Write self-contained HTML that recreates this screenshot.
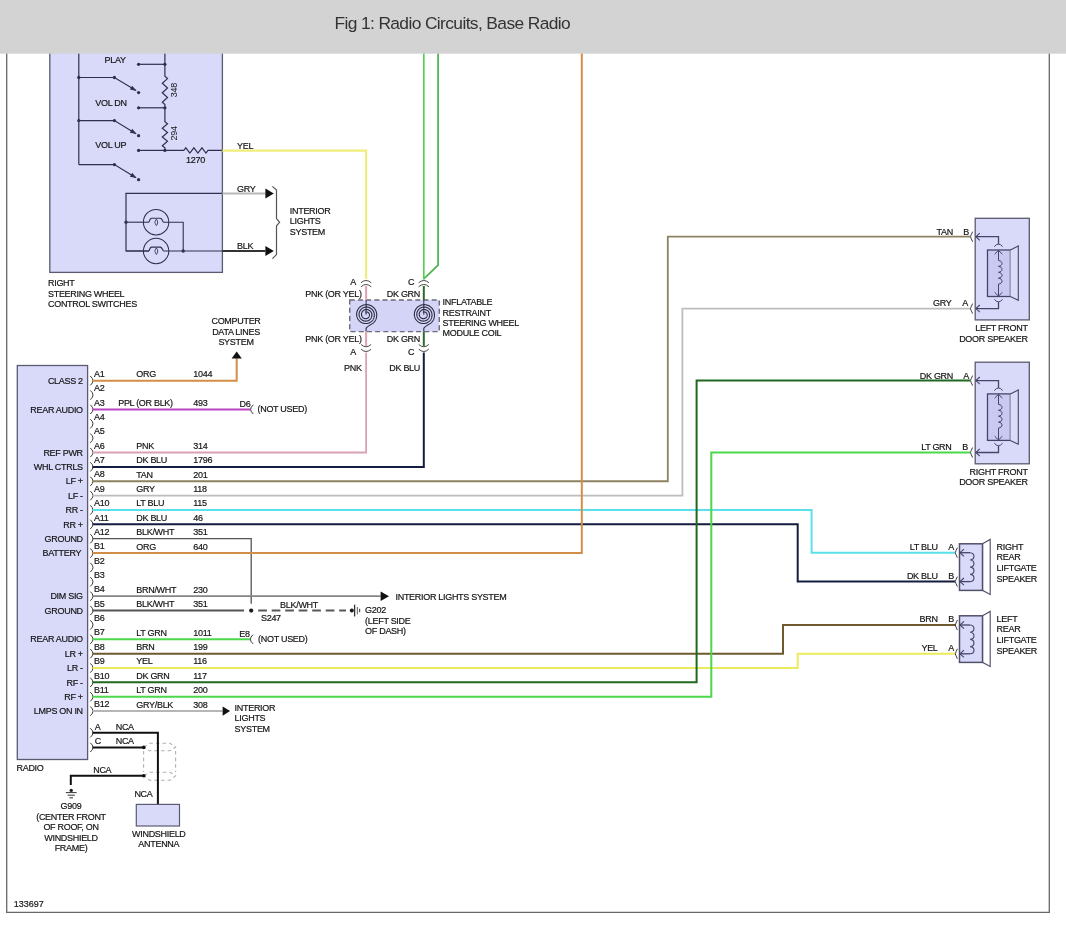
<!DOCTYPE html>
<html><head><meta charset="utf-8"><title>Fig 1: Radio Circuits, Base Radio</title>
<style>html,body{margin:0;padding:0;background:#fff;width:1066px;height:928px;overflow:hidden}
svg{display:block;font-family:"Liberation Sans",sans-serif;will-change:transform}</style></head>
<body><svg width="1066" height="928" viewBox="0 0 1066 928">
<rect x="0" y="0" width="1066" height="928" fill="#ffffff"/>
<path d="M6.70,40.00 L6.70,912.30 L1049.30,912.30 L1049.30,40.00" stroke="#676767" stroke-width="1.3" fill="none" stroke-linejoin="miter" stroke-linecap="butt" />
<rect x="49.8" y="40" width="172.6" height="232.4" fill="#d9d9fa" stroke="#5a5a70" stroke-width="1.3"/>
<path d="M78.80,40.00 L78.80,164.60" stroke="#30304c" stroke-width="1.2" fill="none" stroke-linejoin="miter" stroke-linecap="butt" />
<text x="104.60" y="62.82" text-anchor="start" font-size="9" letter-spacing="-0.3" fill="#141414" stroke="#141414" stroke-width="0.18" >PLAY</text>
<text x="95.30" y="105.72" text-anchor="start" font-size="9" letter-spacing="-0.3" fill="#141414" stroke="#141414" stroke-width="0.18" >VOL DN</text>
<text x="95.30" y="148.22" text-anchor="start" font-size="9" letter-spacing="-0.3" fill="#141414" stroke="#141414" stroke-width="0.18" >VOL UP</text>
<path d="M138.60,64.30 L164.90,64.30" stroke="#30304c" stroke-width="1.2" fill="none" stroke-linejoin="miter" stroke-linecap="butt" />
<circle cx="138.60" cy="64.30" r="1.65" fill="#30304c"/>
<circle cx="164.90" cy="64.30" r="1.65" fill="#30304c"/>
<path d="M138.60,107.80 L164.90,107.80" stroke="#30304c" stroke-width="1.2" fill="none" stroke-linejoin="miter" stroke-linecap="butt" />
<circle cx="138.60" cy="107.80" r="1.65" fill="#30304c"/>
<circle cx="164.90" cy="107.80" r="1.65" fill="#30304c"/>
<path d="M138.60,150.40 L164.90,150.40" stroke="#30304c" stroke-width="1.2" fill="none" stroke-linejoin="miter" stroke-linecap="butt" />
<circle cx="138.60" cy="150.40" r="1.65" fill="#30304c"/>
<circle cx="164.90" cy="150.40" r="1.65" fill="#30304c"/>
<path d="M78.80,77.50 L114.40,77.50 L136.00,90.60" stroke="#30304c" stroke-width="1.2" fill="none" stroke-linejoin="miter" stroke-linecap="butt" />
<circle cx="78.80" cy="77.50" r="1.65" fill="#30304c"/>
<circle cx="114.40" cy="77.50" r="1.65" fill="#30304c"/>
<circle cx="138.60" cy="92.60" r="1.65" fill="#30304c"/>
<path d="M136.60,91.00 L129.85,89.59 L132.24,85.66 Z" fill="#30304c"/>
<path d="M78.80,120.60 L114.40,120.60 L136.00,133.70" stroke="#30304c" stroke-width="1.2" fill="none" stroke-linejoin="miter" stroke-linecap="butt" />
<circle cx="78.80" cy="120.60" r="1.65" fill="#30304c"/>
<circle cx="114.40" cy="120.60" r="1.65" fill="#30304c"/>
<circle cx="138.60" cy="135.70" r="1.65" fill="#30304c"/>
<path d="M136.60,134.10 L129.85,132.69 L132.24,128.76 Z" fill="#30304c"/>
<path d="M78.80,164.60 L114.40,164.60 L136.00,177.70" stroke="#30304c" stroke-width="1.2" fill="none" stroke-linejoin="miter" stroke-linecap="butt" />
<circle cx="114.40" cy="164.60" r="1.65" fill="#30304c"/>
<circle cx="138.60" cy="179.70" r="1.65" fill="#30304c"/>
<path d="M136.60,178.10 L129.85,176.69 L132.24,172.76 Z" fill="#30304c"/>
<path d="M164.90,40.00 L164.90,76.20 L167.50,78.57 L162.30,83.30 L167.50,88.03 L162.30,92.77 L167.50,97.50 L162.30,102.23 L164.90,104.60 L164.90,121.60 L167.50,123.79 L162.30,128.18 L167.50,132.56 L162.30,136.94 L167.50,141.32 L162.30,145.71 L164.90,147.90 L164.90,150.40" stroke="#30304c" stroke-width="1.2" fill="none" stroke-linejoin="miter" stroke-linecap="butt" />
<text x="0" y="0" transform="translate(177.4,90.1) rotate(-90)" text-anchor="middle" font-size="9" letter-spacing="-0.3" fill="#141414">348</text>
<text x="0" y="0" transform="translate(177.4,133.4) rotate(-90)" text-anchor="middle" font-size="9" letter-spacing="-0.3" fill="#141414">294</text>
<path d="M164.90,150.40 L183.80,150.40 L185.82,147.80 L189.85,153.00 L193.88,147.80 L197.92,153.00 L201.95,147.80 L205.98,153.00 L208.00,150.40 L222.40,150.40" stroke="#30304c" stroke-width="1.2" fill="none" stroke-linejoin="miter" stroke-linecap="butt" />
<text x="195.50" y="162.82" text-anchor="middle" font-size="9" letter-spacing="-0.3" fill="#141414" stroke="#141414" stroke-width="0.18" >1270</text>
<path d="M222.40,193.40 L126.00,193.40 L126.00,251.00 L149.00,251.00" stroke="#30304c" stroke-width="1.2" fill="none" stroke-linejoin="miter" stroke-linecap="butt" />
<circle cx="156.1" cy="222.2" r="12.7" fill="none" stroke="#30304c" stroke-width="1.05"/>
<path d="M149,222.2 Q150,218.29999999999998 151.6,218.29999999999998 L160.2,218.29999999999998 Q161.8,218.29999999999998 163.4,222.2" fill="none" stroke="#30304c" stroke-width="1.05"/>
<path d="M156.4,219.2 C154.3,221.39999999999998 154.8,223.79999999999998 156.4,225.6 C157.9,223.79999999999998 158.3,221.39999999999998 156.4,219.2 Z" fill="none" stroke="#30304c" stroke-width="0.9"/>
<circle cx="156.1" cy="251" r="12.7" fill="none" stroke="#30304c" stroke-width="1.05"/>
<path d="M149,251 Q150,247.1 151.6,247.1 L160.2,247.1 Q161.8,247.1 163.4,251" fill="none" stroke="#30304c" stroke-width="1.05"/>
<path d="M156.4,248.0 C154.3,250.2 154.8,252.6 156.4,254.4 C157.9,252.6 158.3,250.2 156.4,248.0 Z" fill="none" stroke="#30304c" stroke-width="0.9"/>
<path d="M126.00,222.20 L149.00,222.20" stroke="#30304c" stroke-width="1.1" fill="none" stroke-linejoin="miter" stroke-linecap="butt" />
<path d="M163.40,222.20 L183.20,222.20 L183.20,251.00" stroke="#30304c" stroke-width="1.1" fill="none" stroke-linejoin="miter" stroke-linecap="butt" />
<path d="M126.00,251.00 L149.00,251.00" stroke="#30304c" stroke-width="1.1" fill="none" stroke-linejoin="miter" stroke-linecap="butt" />
<path d="M163.40,251.00 L222.40,251.00" stroke="#30304c" stroke-width="1.2" fill="none" stroke-linejoin="miter" stroke-linecap="butt" />
<circle cx="126.00" cy="222.20" r="1.65" fill="#30304c"/>
<circle cx="183.20" cy="251.00" r="1.65" fill="#30304c"/>
<path d="M222.40,150.60 L366.10,150.60 L366.10,279.00" stroke="#eeee7a" stroke-width="2.2" fill="none" stroke-linejoin="miter" stroke-linecap="butt" />
<text x="237.00" y="149.22" text-anchor="start" font-size="9" letter-spacing="-0.3" fill="#141414" stroke="#141414" stroke-width="0.18" >YEL</text>
<path d="M222.40,193.50 L265.40,193.50" stroke="#b8b8b8" stroke-width="2" fill="none" stroke-linejoin="miter" stroke-linecap="butt" />
<text x="237.00" y="192.02" text-anchor="start" font-size="9" letter-spacing="-0.3" fill="#141414" stroke="#141414" stroke-width="0.18" >GRY</text>
<path d="M265.4,188.5 L273.8,193.5 L265.4,198.5 Z" fill="#111"/>
<path d="M222.40,251.00 L265.40,251.00" stroke="#333" stroke-width="2" fill="none" stroke-linejoin="miter" stroke-linecap="butt" />
<text x="237.00" y="249.22" text-anchor="start" font-size="9" letter-spacing="-0.3" fill="#141414" stroke="#141414" stroke-width="0.18" >BLK</text>
<path d="M265.4,246 L273.8,251 L265.4,256 Z" fill="#111"/>
<path d="M272.4,186.4 L276.5,190 L276.5,218.6 L279.6,222.3 L276.5,225.8 L276.5,254.6 L272.4,258.7" fill="none" stroke="#555" stroke-width="1.2"/>
<text x="289.80" y="213.52" text-anchor="start" font-size="9" letter-spacing="-0.3" fill="#141414" stroke="#141414" stroke-width="0.18" >INTERIOR</text>
<text x="289.80" y="224.22" text-anchor="start" font-size="9" letter-spacing="-0.3" fill="#141414" stroke="#141414" stroke-width="0.18" >LIGHTS</text>
<text x="289.80" y="234.62" text-anchor="start" font-size="9" letter-spacing="-0.3" fill="#141414" stroke="#141414" stroke-width="0.18" >SYSTEM</text>
<text x="48.00" y="285.82" text-anchor="start" font-size="9" letter-spacing="-0.3" fill="#141414" stroke="#141414" stroke-width="0.18" >RIGHT</text>
<text x="48.00" y="296.62" text-anchor="start" font-size="9" letter-spacing="-0.3" fill="#141414" stroke="#141414" stroke-width="0.18" >STEERING WHEEL</text>
<text x="48.00" y="306.82" text-anchor="start" font-size="9" letter-spacing="-0.3" fill="#141414" stroke="#141414" stroke-width="0.18" >CONTROL SWITCHES</text>
<rect x="349.7" y="300" width="89.6" height="31.6" fill="#d4d4f6" stroke="#6a6a7a" stroke-width="1.4" stroke-dasharray="5,3.2"/>
<path d="M366.10,286.00 L366.10,300.00" stroke="#e0a0b0" stroke-width="2" fill="none" stroke-linejoin="miter" stroke-linecap="butt" />
<path d="M366.10,300.00 L366.10,314.70" fill="none" stroke="#2a2a40" stroke-width="1"/>
<path d="M365.13,312.29 L365.21,312.24 L365.29,312.20 L365.38,312.16 L365.47,312.12 L365.56,312.09 L365.65,312.05 L365.75,312.03 L365.84,312.00 L365.94,311.98 L366.04,311.96 L366.14,311.95 L366.24,311.94 L366.34,311.93 L366.44,311.92 L366.54,311.92 L366.64,311.93 L366.75,311.94 L366.85,311.95 L366.95,311.96 L367.06,311.98 L367.16,312.01 L367.26,312.03 L367.36,312.07 L367.46,312.10 L367.56,312.14 L367.66,312.18 L367.76,312.23 L367.86,312.28 L367.95,312.33 L368.05,312.39 L368.14,312.45 L368.23,312.52 L368.31,312.58 L368.40,312.66 L368.48,312.73 L368.56,312.81 L368.64,312.89 L368.72,312.98 L368.79,313.07 L368.86,313.16 L368.92,313.25 L368.99,313.35 L369.05,313.45 L369.10,313.55 L369.16,313.66 L369.21,313.76 L369.25,313.87 L369.29,313.98 L369.33,314.10 L369.36,314.21 L369.39,314.33 L369.42,314.45 L369.44,314.57 L369.46,314.69 L369.47,314.81 L369.48,314.93 L369.48,315.05 L369.48,315.18 L369.47,315.30 L369.46,315.43 L369.45,315.55 L369.43,315.68 L369.40,315.80 L369.38,315.92 L369.34,316.05 L369.30,316.17 L369.26,316.29 L369.21,316.41 L369.16,316.53 L369.11,316.64 L369.05,316.76 L368.98,316.87 L368.91,316.98 L368.84,317.09 L368.76,317.20 L368.68,317.31 L368.59,317.41 L368.50,317.51 L368.41,317.60 L368.31,317.69 L368.21,317.78 L368.10,317.87 L367.99,317.95 L367.88,318.03 L367.76,318.10 L367.65,318.18 L367.52,318.24 L367.40,318.30 L367.27,318.36 L367.14,318.42 L367.01,318.46 L366.88,318.51 L366.74,318.55 L366.61,318.58 L366.47,318.61 L366.33,318.64 L366.18,318.66 L366.04,318.67 L365.90,318.68 L365.75,318.68 L365.61,318.68 L365.46,318.68 L365.31,318.66 L365.17,318.65 L365.02,318.62 L364.88,318.60 L364.73,318.56 L364.59,318.52 L364.45,318.48 L364.30,318.43 L364.16,318.38 L364.03,318.32 L363.89,318.25 L363.75,318.18 L363.62,318.10 L363.49,318.02 L363.37,317.94 L363.24,317.85 L363.12,317.75 L363.00,317.65 L362.89,317.55 L362.77,317.44 L362.67,317.32 L362.56,317.21 L362.46,317.09 L362.37,316.96 L362.27,316.83 L362.19,316.70 L362.11,316.56 L362.03,316.42 L361.96,316.28 L361.89,316.13 L361.83,315.98 L361.77,315.83 L361.72,315.68 L361.67,315.52 L361.63,315.36 L361.60,315.20 L361.57,315.04 L361.54,314.88 L361.53,314.71 L361.51,314.54 L361.51,314.38 L361.51,314.21 L361.52,314.04 L361.53,313.88 L361.55,313.71 L361.57,313.54 L361.61,313.37 L361.64,313.21 L361.69,313.04 L361.74,312.88 L361.79,312.72 L361.85,312.56 L361.92,312.40 L362.00,312.24 L362.08,312.09 L362.16,311.94 L362.25,311.79 L362.35,311.64 L362.45,311.50 L362.56,311.36 L362.67,311.22 L362.79,311.09 L362.91,310.96 L363.04,310.84 L363.18,310.72 L363.31,310.61 L363.46,310.50 L363.60,310.39 L363.75,310.29 L363.91,310.20 L364.07,310.11 L364.23,310.02 L364.39,309.95 L364.56,309.88 L364.73,309.81 L364.91,309.75 L365.08,309.70 L365.26,309.65 L365.44,309.61 L365.63,309.57 L365.81,309.55 L366.00,309.52 L366.19,309.51 L366.37,309.50 L366.56,309.50 L366.75,309.51 L366.94,309.52 L367.13,309.54 L367.32,309.57 L367.51,309.60 L367.70,309.64 L367.88,309.69 L368.07,309.75 L368.25,309.81 L368.43,309.88 L368.61,309.95 L368.79,310.03 L368.96,310.12 L369.13,310.22 L369.30,310.32 L369.47,310.42 L369.63,310.54 L369.78,310.66 L369.94,310.78 L370.09,310.91 L370.23,311.05 L370.37,311.19 L370.51,311.34 L370.64,311.50 L370.76,311.65 L370.88,311.82 L370.99,311.99 L371.10,312.16 L371.20,312.33 L371.30,312.51 L371.39,312.70 L371.47,312.89 L371.54,313.08 L371.61,313.27 L371.67,313.47 L371.73,313.67 L371.78,313.87 L371.82,314.07 L371.85,314.28 L371.87,314.49 L371.89,314.70 L371.90,314.91 L371.91,315.12 L371.90,315.33 L371.89,315.54 L371.87,315.75 L371.84,315.96 L371.80,316.17 L371.76,316.38 L371.71,316.59 L371.65,316.79 L371.58,317.00 L371.51,317.20 L371.43,317.40 L371.34,317.60 L371.24,317.79 L371.14,317.98 L371.03,318.17 L370.91,318.36 L370.79,318.54 L370.66,318.71 L370.52,318.88 L370.38,319.05 L370.23,319.21 L370.07,319.37 L369.91,319.52 L369.74,319.67 L369.56,319.81 L369.38,319.94 L369.20,320.07 L369.01,320.19 L368.82,320.30 L368.62,320.41 L368.42,320.51 L368.21,320.60 L368.00,320.69 L367.78,320.77 L367.57,320.84 L367.35,320.90 L367.13,320.95 L366.90,321.00 L366.67,321.04 L366.45,321.07 L366.21,321.09 L365.98,321.11 L365.75,321.11 L365.52,321.11 L365.29,321.10 L365.05,321.08 L364.82,321.05 L364.59,321.01 L364.36,320.97 L364.13,320.91 L363.90,320.85 L363.67,320.78 L363.45,320.70 L363.23,320.62 L363.01,320.52 L362.80,320.42 L362.58,320.31 L362.38,320.19 L362.17,320.06 L361.97,319.93 L361.78,319.78 L361.59,319.64 L361.40,319.48 L361.22,319.32 L361.05,319.15 L360.88,318.97 L360.72,318.79 L360.56,318.60 L360.41,318.40 L360.27,318.20 L360.14,318.00 L360.01,317.78 L359.89,317.57 L359.78,317.35 L359.67,317.12 L359.57,316.89 L359.49,316.66 L359.41,316.42 L359.33,316.18 L359.27,315.94 L359.22,315.70 L359.17,315.45 L359.14,315.20 L359.11,314.95 L359.09,314.69 L359.08,314.44 L359.08,314.19 L359.09,313.93 L359.11,313.68 L359.14,313.42 L359.17,313.17 L359.22,312.92 L359.28,312.66 L359.34,312.41 L359.41,312.17 L359.50,311.92 L359.59,311.68 L359.69,311.44 L359.80,311.20 L359.92,310.97 L360.04,310.74 L360.18,310.52 L360.32,310.30 L360.48,310.08 L360.64,309.87 L360.80,309.67 L360.98,309.47 L361.16,309.28 L361.35,309.09 L361.55,308.92 L361.75,308.74 L361.96,308.58 L362.18,308.42 L362.40,308.27 L362.63,308.13 L362.86,308.00 L363.10,307.87 L363.34,307.75 L363.59,307.65 L363.84,307.55 L364.10,307.46 L364.36,307.38 L364.62,307.30 L364.89,307.24 L365.16,307.19 L365.43,307.15 L365.70,307.11 L365.98,307.09 L366.25,307.08 L366.53,307.07 L366.80,307.08 L367.08,307.09 L367.36,307.12 L367.63,307.16 L367.91,307.20 L368.18,307.26 L368.45,307.33 L368.72,307.40 L368.99,307.49 L369.25,307.59 L369.51,307.69 L369.77,307.81 L370.02,307.93 L370.27,308.07 L370.52,308.21 L370.76,308.36 L370.99,308.53 L371.22,308.70 L371.44,308.87 L371.66,309.06 L371.87,309.26 L372.07,309.46 L372.27,309.67 L372.46,309.89 L372.64,310.11 L372.81,310.34 L372.98,310.58 L373.14,310.83 L373.28,311.08 L373.42,311.33 L373.55,311.59 L373.67,311.86 L373.78,312.13 L373.88,312.41 L373.98,312.69 L374.06,312.97 L374.13,313.25 L374.19,313.54 L374.24,313.83 L374.28,314.13 L374.31,314.42 L374.33,314.72 L374.34,315.02 L374.33,315.32 L374.32,315.61 L374.29,315.91 L374.26,316.21 L374.21,316.51 L374.16,316.80 L374.09,317.10 L374.01,317.39 L373.92,317.68 L373.82,317.96 L373.71,318.25 L373.59,318.52 L373.46,318.80 L373.32,319.07 L373.17,319.34 L373.01,319.60 L372.84,319.85 L372.66,320.10 L372.47,320.34 L372.27,320.58 L372.06,320.81 L371.85,321.03 L371.63,321.24 L371.39,321.45 L371.16,321.65 L370.91,321.84 L370.66,322.02 L370.39,322.19 L370.13,322.35 L369.85,322.51 L369.58,322.65 L369.29,322.78 L369.00,322.91 L368.71,323.02 L368.41,323.12 L368.11,323.21 L367.80,323.29 L367.49,323.36 L367.18,323.42 L366.87,323.47 L366.55,323.50 L366.23,323.53 L365.91,323.54 L365.59,323.54 L365.27,323.53 L364.95,323.51 L364.63,323.48 L364.31,323.43 L363.99,323.38 L363.68,323.31 L363.37,323.23 L363.05,323.14 L362.75,323.03 L362.44,322.92 L362.14,322.80 L361.84,322.66 L361.55,322.51 L361.27,322.36 L360.98,322.19 L360.71,322.01 L360.44,321.82 L360.18,321.62 L359.92,321.41 L359.67,321.20 L359.43,320.97 L359.20,320.73 L358.98,320.49 L358.76,320.24 L358.55,319.98 L358.36,319.71 L358.17,319.43 L357.99,319.15 L357.82,318.86 L357.66,318.56 L357.52,318.26 L357.38,317.95 L357.26,317.64 L357.14,317.32 L357.04,317.00 L356.95,316.68 L356.87,316.35 L356.80,316.01 L356.75,315.68 L356.70,315.34 L356.67,315.00 L356.65,314.66 L356.65,314.32 L356.65,313.98 L356.67,313.64 L356.70,313.29 L356.75,312.95 L356.80,312.61 L356.87,312.27 L356.95,311.94 L357.04,311.61 L357.15,311.28 L357.26,310.95 L357.39,310.63 L357.53,310.31 L357.68,309.99 L357.85,309.69 L358.02,309.38 L358.21,309.09 L358.41,308.80 L358.61,308.51 L358.83,308.24 L359.06,307.97 L359.30,307.71 L359.54,307.46 L359.80,307.22 L360.07,306.98 L360.34,306.76 L360.62,306.54 L360.91,306.34 L361.21,306.15 L361.52,305.96 L361.83,305.79 L362.15,305.63 L362.48,305.48 L362.81,305.34 L363.14,305.21 L363.48,305.10 L363.83,305.00 L364.18,304.91 L364.53,304.83 L364.89,304.77 L365.24,304.72 L365.60,304.68 L365.97,304.65 L366.33,304.64 L366.69,304.64 L367.06,304.66 L367.42,304.68 L367.79,304.72 L368.15,304.78 L368.51,304.84 L368.87,304.92 L369.22,305.02 L369.57,305.12 L369.92,305.24 L370.27,305.37 L370.61,305.52 L370.94,305.67 L371.27,305.84 L371.60,306.02 L371.92,306.22 L372.23,306.42 L372.53,306.64 L372.83,306.86 L373.11,307.10 L373.39,307.35 L373.67,307.61 L373.93,307.88 L374.18,308.15 L374.42,308.44 L374.65,308.74 L374.88,309.04 L375.09,309.36 L375.29,309.68 L375.47,310.01 L375.65,310.34 L375.81,310.69 L375.97,311.04 L376.10,311.39 L376.23,311.75 L376.34,312.11 L376.44,312.48 L376.53,312.85 L376.61,313.23 L376.67,313.61 L376.71,313.99 L376.75,314.37 L376.76,314.76 L376.77,315.15 L376.76,315.53 L376.74,315.92 L376.70,316.30 L376.65,316.69 L376.58,317.07 L376.50,317.45 L376.41,317.83 L376.31,318.20 L376.19,318.58 L376.05,318.94 L375.90,319.31 L375.74,319.66 L375.57,320.01 L375.38,320.36 L375.19,320.70 L374.97,321.03 L374.75,321.36 L374.52,321.67 L374.27,321.98 L374.01,322.28 L373.74,322.57 L373.46,322.86 L373.17,323.13 Q366.70,326.90 366.10,328.30 L366.10,331.60" fill="none" stroke="#2a2a40" stroke-width="1.1"/>
<path d="M366.10,331.60 L366.10,346.00" stroke="#e0a0b0" stroke-width="2" fill="none" stroke-linejoin="miter" stroke-linecap="butt" />
<path d="M360.90,282.80 Q366.10,278.20 371.30,282.80" fill="none" stroke="#333" stroke-width="0.9"/>
<path d="M360.90,286.80 Q366.10,282.20 371.30,286.80" fill="none" stroke="#333" stroke-width="0.9"/>
<path d="M361.10,344.50 Q366.10,349.10 371.10,344.50" fill="none" stroke="#333" stroke-width="0.9"/>
<path d="M361.10,349.20 Q366.10,353.80 371.10,349.20" fill="none" stroke="#333" stroke-width="0.9"/>
<text x="353.00" y="285.22" text-anchor="middle" font-size="9" letter-spacing="-0.3" fill="#141414" stroke="#141414" stroke-width="0.18" >A</text>
<text x="361.60" y="296.82" text-anchor="end" font-size="9" letter-spacing="-0.3" fill="#141414" stroke="#141414" stroke-width="0.18" >PNK (OR YEL)</text>
<text x="361.60" y="341.52" text-anchor="end" font-size="9" letter-spacing="-0.3" fill="#141414" stroke="#141414" stroke-width="0.18" >PNK (OR YEL)</text>
<text x="353.00" y="354.82" text-anchor="middle" font-size="9" letter-spacing="-0.3" fill="#141414" stroke="#141414" stroke-width="0.18" >A</text>
<text x="361.60" y="370.62" text-anchor="end" font-size="9" letter-spacing="-0.3" fill="#141414" stroke="#141414" stroke-width="0.18" >PNK</text>
<path d="M438.10,40.00 L438.10,265.20 L423.80,278.80" stroke="#4cb44c" stroke-width="1.7" fill="none" stroke-linejoin="miter" stroke-linecap="butt" />
<path d="M423.80,40.00 L423.80,279.50" stroke="#58cc58" stroke-width="1.7" fill="none" stroke-linejoin="miter" stroke-linecap="butt" />
<path d="M423.80,286.00 L423.80,300.00" stroke="#2b6b2b" stroke-width="2" fill="none" stroke-linejoin="miter" stroke-linecap="butt" />
<path d="M423.80,300.00 L423.80,314.70" fill="none" stroke="#2a2a40" stroke-width="1"/>
<path d="M422.83,312.29 L422.91,312.24 L422.99,312.20 L423.08,312.16 L423.17,312.12 L423.26,312.09 L423.35,312.05 L423.45,312.03 L423.54,312.00 L423.64,311.98 L423.74,311.96 L423.84,311.95 L423.94,311.94 L424.04,311.93 L424.14,311.92 L424.24,311.92 L424.34,311.93 L424.45,311.94 L424.55,311.95 L424.65,311.96 L424.76,311.98 L424.86,312.01 L424.96,312.03 L425.06,312.07 L425.16,312.10 L425.26,312.14 L425.36,312.18 L425.46,312.23 L425.56,312.28 L425.65,312.33 L425.75,312.39 L425.84,312.45 L425.93,312.52 L426.01,312.58 L426.10,312.66 L426.18,312.73 L426.26,312.81 L426.34,312.89 L426.42,312.98 L426.49,313.07 L426.56,313.16 L426.62,313.25 L426.69,313.35 L426.75,313.45 L426.80,313.55 L426.86,313.66 L426.91,313.76 L426.95,313.87 L426.99,313.98 L427.03,314.10 L427.06,314.21 L427.09,314.33 L427.12,314.45 L427.14,314.57 L427.16,314.69 L427.17,314.81 L427.18,314.93 L427.18,315.05 L427.18,315.18 L427.17,315.30 L427.16,315.43 L427.15,315.55 L427.13,315.68 L427.10,315.80 L427.08,315.92 L427.04,316.05 L427.00,316.17 L426.96,316.29 L426.91,316.41 L426.86,316.53 L426.81,316.64 L426.75,316.76 L426.68,316.87 L426.61,316.98 L426.54,317.09 L426.46,317.20 L426.38,317.31 L426.29,317.41 L426.20,317.51 L426.11,317.60 L426.01,317.69 L425.91,317.78 L425.80,317.87 L425.69,317.95 L425.58,318.03 L425.46,318.10 L425.35,318.18 L425.22,318.24 L425.10,318.30 L424.97,318.36 L424.84,318.42 L424.71,318.46 L424.58,318.51 L424.44,318.55 L424.31,318.58 L424.17,318.61 L424.03,318.64 L423.88,318.66 L423.74,318.67 L423.60,318.68 L423.45,318.68 L423.31,318.68 L423.16,318.68 L423.01,318.66 L422.87,318.65 L422.72,318.62 L422.58,318.60 L422.43,318.56 L422.29,318.52 L422.15,318.48 L422.00,318.43 L421.86,318.38 L421.73,318.32 L421.59,318.25 L421.45,318.18 L421.32,318.10 L421.19,318.02 L421.07,317.94 L420.94,317.85 L420.82,317.75 L420.70,317.65 L420.59,317.55 L420.47,317.44 L420.37,317.32 L420.26,317.21 L420.16,317.09 L420.07,316.96 L419.97,316.83 L419.89,316.70 L419.81,316.56 L419.73,316.42 L419.66,316.28 L419.59,316.13 L419.53,315.98 L419.47,315.83 L419.42,315.68 L419.37,315.52 L419.33,315.36 L419.30,315.20 L419.27,315.04 L419.24,314.88 L419.23,314.71 L419.21,314.54 L419.21,314.38 L419.21,314.21 L419.22,314.04 L419.23,313.88 L419.25,313.71 L419.27,313.54 L419.31,313.37 L419.34,313.21 L419.39,313.04 L419.44,312.88 L419.49,312.72 L419.55,312.56 L419.62,312.40 L419.70,312.24 L419.78,312.09 L419.86,311.94 L419.95,311.79 L420.05,311.64 L420.15,311.50 L420.26,311.36 L420.37,311.22 L420.49,311.09 L420.61,310.96 L420.74,310.84 L420.88,310.72 L421.01,310.61 L421.16,310.50 L421.30,310.39 L421.45,310.29 L421.61,310.20 L421.77,310.11 L421.93,310.02 L422.09,309.95 L422.26,309.88 L422.43,309.81 L422.61,309.75 L422.78,309.70 L422.96,309.65 L423.14,309.61 L423.33,309.57 L423.51,309.55 L423.70,309.52 L423.89,309.51 L424.07,309.50 L424.26,309.50 L424.45,309.51 L424.64,309.52 L424.83,309.54 L425.02,309.57 L425.21,309.60 L425.40,309.64 L425.58,309.69 L425.77,309.75 L425.95,309.81 L426.13,309.88 L426.31,309.95 L426.49,310.03 L426.66,310.12 L426.83,310.22 L427.00,310.32 L427.17,310.42 L427.33,310.54 L427.48,310.66 L427.64,310.78 L427.79,310.91 L427.93,311.05 L428.07,311.19 L428.21,311.34 L428.34,311.50 L428.46,311.65 L428.58,311.82 L428.69,311.99 L428.80,312.16 L428.90,312.33 L429.00,312.51 L429.09,312.70 L429.17,312.89 L429.24,313.08 L429.31,313.27 L429.37,313.47 L429.43,313.67 L429.48,313.87 L429.52,314.07 L429.55,314.28 L429.57,314.49 L429.59,314.70 L429.60,314.91 L429.61,315.12 L429.60,315.33 L429.59,315.54 L429.57,315.75 L429.54,315.96 L429.50,316.17 L429.46,316.38 L429.41,316.59 L429.35,316.79 L429.28,317.00 L429.21,317.20 L429.13,317.40 L429.04,317.60 L428.94,317.79 L428.84,317.98 L428.73,318.17 L428.61,318.36 L428.49,318.54 L428.36,318.71 L428.22,318.88 L428.08,319.05 L427.93,319.21 L427.77,319.37 L427.61,319.52 L427.44,319.67 L427.26,319.81 L427.08,319.94 L426.90,320.07 L426.71,320.19 L426.52,320.30 L426.32,320.41 L426.12,320.51 L425.91,320.60 L425.70,320.69 L425.48,320.77 L425.27,320.84 L425.05,320.90 L424.83,320.95 L424.60,321.00 L424.37,321.04 L424.15,321.07 L423.91,321.09 L423.68,321.11 L423.45,321.11 L423.22,321.11 L422.99,321.10 L422.75,321.08 L422.52,321.05 L422.29,321.01 L422.06,320.97 L421.83,320.91 L421.60,320.85 L421.37,320.78 L421.15,320.70 L420.93,320.62 L420.71,320.52 L420.50,320.42 L420.28,320.31 L420.08,320.19 L419.87,320.06 L419.67,319.93 L419.48,319.78 L419.29,319.64 L419.10,319.48 L418.92,319.32 L418.75,319.15 L418.58,318.97 L418.42,318.79 L418.26,318.60 L418.11,318.40 L417.97,318.20 L417.84,318.00 L417.71,317.78 L417.59,317.57 L417.48,317.35 L417.37,317.12 L417.27,316.89 L417.19,316.66 L417.11,316.42 L417.03,316.18 L416.97,315.94 L416.92,315.70 L416.87,315.45 L416.84,315.20 L416.81,314.95 L416.79,314.69 L416.78,314.44 L416.78,314.19 L416.79,313.93 L416.81,313.68 L416.84,313.42 L416.87,313.17 L416.92,312.92 L416.98,312.66 L417.04,312.41 L417.11,312.17 L417.20,311.92 L417.29,311.68 L417.39,311.44 L417.50,311.20 L417.62,310.97 L417.74,310.74 L417.88,310.52 L418.02,310.30 L418.18,310.08 L418.34,309.87 L418.50,309.67 L418.68,309.47 L418.86,309.28 L419.05,309.09 L419.25,308.92 L419.45,308.74 L419.66,308.58 L419.88,308.42 L420.10,308.27 L420.33,308.13 L420.56,308.00 L420.80,307.87 L421.04,307.75 L421.29,307.65 L421.54,307.55 L421.80,307.46 L422.06,307.38 L422.32,307.30 L422.59,307.24 L422.86,307.19 L423.13,307.15 L423.40,307.11 L423.68,307.09 L423.95,307.08 L424.23,307.07 L424.50,307.08 L424.78,307.09 L425.06,307.12 L425.33,307.16 L425.61,307.20 L425.88,307.26 L426.15,307.33 L426.42,307.40 L426.69,307.49 L426.95,307.59 L427.21,307.69 L427.47,307.81 L427.72,307.93 L427.97,308.07 L428.22,308.21 L428.46,308.36 L428.69,308.53 L428.92,308.70 L429.14,308.87 L429.36,309.06 L429.57,309.26 L429.77,309.46 L429.97,309.67 L430.16,309.89 L430.34,310.11 L430.51,310.34 L430.68,310.58 L430.84,310.83 L430.98,311.08 L431.12,311.33 L431.25,311.59 L431.37,311.86 L431.48,312.13 L431.58,312.41 L431.68,312.69 L431.76,312.97 L431.83,313.25 L431.89,313.54 L431.94,313.83 L431.98,314.13 L432.01,314.42 L432.03,314.72 L432.04,315.02 L432.03,315.32 L432.02,315.61 L431.99,315.91 L431.96,316.21 L431.91,316.51 L431.86,316.80 L431.79,317.10 L431.71,317.39 L431.62,317.68 L431.52,317.96 L431.41,318.25 L431.29,318.52 L431.16,318.80 L431.02,319.07 L430.87,319.34 L430.71,319.60 L430.54,319.85 L430.36,320.10 L430.17,320.34 L429.97,320.58 L429.76,320.81 L429.55,321.03 L429.33,321.24 L429.09,321.45 L428.86,321.65 L428.61,321.84 L428.36,322.02 L428.09,322.19 L427.83,322.35 L427.55,322.51 L427.28,322.65 L426.99,322.78 L426.70,322.91 L426.41,323.02 L426.11,323.12 L425.81,323.21 L425.50,323.29 L425.19,323.36 L424.88,323.42 L424.57,323.47 L424.25,323.50 L423.93,323.53 L423.61,323.54 L423.29,323.54 L422.97,323.53 L422.65,323.51 L422.33,323.48 L422.01,323.43 L421.69,323.38 L421.38,323.31 L421.07,323.23 L420.75,323.14 L420.45,323.03 L420.14,322.92 L419.84,322.80 L419.54,322.66 L419.25,322.51 L418.97,322.36 L418.68,322.19 L418.41,322.01 L418.14,321.82 L417.88,321.62 L417.62,321.41 L417.37,321.20 L417.13,320.97 L416.90,320.73 L416.68,320.49 L416.46,320.24 L416.25,319.98 L416.06,319.71 L415.87,319.43 L415.69,319.15 L415.52,318.86 L415.36,318.56 L415.22,318.26 L415.08,317.95 L414.96,317.64 L414.84,317.32 L414.74,317.00 L414.65,316.68 L414.57,316.35 L414.50,316.01 L414.45,315.68 L414.40,315.34 L414.37,315.00 L414.35,314.66 L414.35,314.32 L414.35,313.98 L414.37,313.64 L414.40,313.29 L414.45,312.95 L414.50,312.61 L414.57,312.27 L414.65,311.94 L414.74,311.61 L414.85,311.28 L414.96,310.95 L415.09,310.63 L415.23,310.31 L415.38,309.99 L415.55,309.69 L415.72,309.38 L415.91,309.09 L416.11,308.80 L416.31,308.51 L416.53,308.24 L416.76,307.97 L417.00,307.71 L417.24,307.46 L417.50,307.22 L417.77,306.98 L418.04,306.76 L418.32,306.54 L418.61,306.34 L418.91,306.15 L419.22,305.96 L419.53,305.79 L419.85,305.63 L420.18,305.48 L420.51,305.34 L420.84,305.21 L421.18,305.10 L421.53,305.00 L421.88,304.91 L422.23,304.83 L422.59,304.77 L422.94,304.72 L423.30,304.68 L423.67,304.65 L424.03,304.64 L424.39,304.64 L424.76,304.66 L425.12,304.68 L425.49,304.72 L425.85,304.78 L426.21,304.84 L426.57,304.92 L426.92,305.02 L427.27,305.12 L427.62,305.24 L427.97,305.37 L428.31,305.52 L428.64,305.67 L428.97,305.84 L429.30,306.02 L429.62,306.22 L429.93,306.42 L430.23,306.64 L430.53,306.86 L430.81,307.10 L431.09,307.35 L431.37,307.61 L431.63,307.88 L431.88,308.15 L432.12,308.44 L432.35,308.74 L432.58,309.04 L432.79,309.36 L432.99,309.68 L433.17,310.01 L433.35,310.34 L433.51,310.69 L433.67,311.04 L433.80,311.39 L433.93,311.75 L434.04,312.11 L434.14,312.48 L434.23,312.85 L434.31,313.23 L434.37,313.61 L434.41,313.99 L434.45,314.37 L434.46,314.76 L434.47,315.15 L434.46,315.53 L434.44,315.92 L434.40,316.30 L434.35,316.69 L434.28,317.07 L434.20,317.45 L434.11,317.83 L434.01,318.20 L433.89,318.58 L433.75,318.94 L433.60,319.31 L433.44,319.66 L433.27,320.01 L433.08,320.36 L432.89,320.70 L432.67,321.03 L432.45,321.36 L432.22,321.67 L431.97,321.98 L431.71,322.28 L431.44,322.57 L431.16,322.86 L430.87,323.13 Q424.40,326.90 423.80,328.30 L423.80,331.60" fill="none" stroke="#2a2a40" stroke-width="1.1"/>
<path d="M423.80,331.60 L423.80,346.00" stroke="#2b6b2b" stroke-width="2" fill="none" stroke-linejoin="miter" stroke-linecap="butt" />
<path d="M418.60,282.80 Q423.80,278.20 429.00,282.80" fill="none" stroke="#333" stroke-width="0.9"/>
<path d="M418.60,286.80 Q423.80,282.20 429.00,286.80" fill="none" stroke="#333" stroke-width="0.9"/>
<path d="M418.80,344.50 Q423.80,349.10 428.80,344.50" fill="none" stroke="#333" stroke-width="0.9"/>
<path d="M418.80,349.20 Q423.80,353.80 428.80,349.20" fill="none" stroke="#333" stroke-width="0.9"/>
<text x="411.00" y="284.62" text-anchor="middle" font-size="9" letter-spacing="-0.3" fill="#141414" stroke="#141414" stroke-width="0.18" >C</text>
<text x="420.00" y="296.82" text-anchor="end" font-size="9" letter-spacing="-0.3" fill="#141414" stroke="#141414" stroke-width="0.18" >DK GRN</text>
<text x="420.00" y="341.52" text-anchor="end" font-size="9" letter-spacing="-0.3" fill="#141414" stroke="#141414" stroke-width="0.18" >DK GRN</text>
<text x="411.00" y="354.82" text-anchor="middle" font-size="9" letter-spacing="-0.3" fill="#141414" stroke="#141414" stroke-width="0.18" >C</text>
<text x="420.00" y="370.62" text-anchor="end" font-size="9" letter-spacing="-0.3" fill="#141414" stroke="#141414" stroke-width="0.18" >DK BLU</text>
<text x="442.60" y="304.82" text-anchor="start" font-size="9" letter-spacing="-0.3" fill="#141414" stroke="#141414" stroke-width="0.18" >INFLATABLE</text>
<text x="442.60" y="315.62" text-anchor="start" font-size="9" letter-spacing="-0.3" fill="#141414" stroke="#141414" stroke-width="0.18" >RESTRAINT</text>
<text x="442.60" y="326.02" text-anchor="start" font-size="9" letter-spacing="-0.3" fill="#141414" stroke="#141414" stroke-width="0.18" >STEERING WHEEL</text>
<text x="442.60" y="336.42" text-anchor="start" font-size="9" letter-spacing="-0.3" fill="#141414" stroke="#141414" stroke-width="0.18" >MODULE COIL</text>
<rect x="17.3" y="365.5" width="70.3" height="394" fill="#d9d9fa" stroke="#5a5a70" stroke-width="1.3"/>
<text x="16.50" y="770.82" text-anchor="start" font-size="9" letter-spacing="-0.3" fill="#141414" stroke="#141414" stroke-width="0.18" >RADIO</text>
<text x="94.10" y="376.92" text-anchor="start" font-size="9" letter-spacing="-0.3" fill="#141414" stroke="#141414" stroke-width="0.18" >A1</text>
<path d="M90.30,376.10 Q95.70,380.70 90.30,385.30" fill="none" stroke="#3a3a3a" stroke-width="1"/>
<text x="82.80" y="383.92" text-anchor="end" font-size="9" letter-spacing="-0.3" fill="#141414" stroke="#141414" stroke-width="0.18" >CLASS 2</text>
<text x="94.10" y="391.29" text-anchor="start" font-size="9" letter-spacing="-0.3" fill="#141414" stroke="#141414" stroke-width="0.18" >A2</text>
<path d="M90.30,390.46 Q95.70,395.06 90.30,399.67" fill="none" stroke="#3a3a3a" stroke-width="1"/>
<text x="94.10" y="405.65" text-anchor="start" font-size="9" letter-spacing="-0.3" fill="#141414" stroke="#141414" stroke-width="0.18" >A3</text>
<path d="M90.30,404.83 Q95.70,409.43 90.30,414.03" fill="none" stroke="#3a3a3a" stroke-width="1"/>
<text x="82.80" y="412.65" text-anchor="end" font-size="9" letter-spacing="-0.3" fill="#141414" stroke="#141414" stroke-width="0.18" >REAR AUDIO</text>
<text x="94.10" y="420.02" text-anchor="start" font-size="9" letter-spacing="-0.3" fill="#141414" stroke="#141414" stroke-width="0.18" >A4</text>
<path d="M90.30,419.19 Q95.70,423.79 90.30,428.39" fill="none" stroke="#3a3a3a" stroke-width="1"/>
<text x="94.10" y="434.38" text-anchor="start" font-size="9" letter-spacing="-0.3" fill="#141414" stroke="#141414" stroke-width="0.18" >A5</text>
<path d="M90.30,433.56 Q95.70,438.16 90.30,442.76" fill="none" stroke="#3a3a3a" stroke-width="1"/>
<text x="94.10" y="448.75" text-anchor="start" font-size="9" letter-spacing="-0.3" fill="#141414" stroke="#141414" stroke-width="0.18" >A6</text>
<path d="M90.30,447.92 Q95.70,452.52 90.30,457.12" fill="none" stroke="#3a3a3a" stroke-width="1"/>
<text x="82.80" y="455.75" text-anchor="end" font-size="9" letter-spacing="-0.3" fill="#141414" stroke="#141414" stroke-width="0.18" >REF PWR</text>
<text x="94.10" y="463.11" text-anchor="start" font-size="9" letter-spacing="-0.3" fill="#141414" stroke="#141414" stroke-width="0.18" >A7</text>
<path d="M90.30,462.29 Q95.70,466.89 90.30,471.49" fill="none" stroke="#3a3a3a" stroke-width="1"/>
<text x="82.80" y="470.11" text-anchor="end" font-size="9" letter-spacing="-0.3" fill="#141414" stroke="#141414" stroke-width="0.18" >WHL CTRLS</text>
<text x="94.10" y="477.48" text-anchor="start" font-size="9" letter-spacing="-0.3" fill="#141414" stroke="#141414" stroke-width="0.18" >A8</text>
<path d="M90.30,476.65 Q95.70,481.25 90.30,485.86" fill="none" stroke="#3a3a3a" stroke-width="1"/>
<text x="82.80" y="484.48" text-anchor="end" font-size="9" letter-spacing="-0.3" fill="#141414" stroke="#141414" stroke-width="0.18" >LF +</text>
<text x="94.10" y="491.84" text-anchor="start" font-size="9" letter-spacing="-0.3" fill="#141414" stroke="#141414" stroke-width="0.18" >A9</text>
<path d="M90.30,491.02 Q95.70,495.62 90.30,500.22" fill="none" stroke="#3a3a3a" stroke-width="1"/>
<text x="82.80" y="498.84" text-anchor="end" font-size="9" letter-spacing="-0.3" fill="#141414" stroke="#141414" stroke-width="0.18" >LF -</text>
<text x="94.10" y="506.21" text-anchor="start" font-size="9" letter-spacing="-0.3" fill="#141414" stroke="#141414" stroke-width="0.18" >A10</text>
<path d="M90.30,505.38 Q95.70,509.99 90.30,514.59" fill="none" stroke="#3a3a3a" stroke-width="1"/>
<text x="82.80" y="513.21" text-anchor="end" font-size="9" letter-spacing="-0.3" fill="#141414" stroke="#141414" stroke-width="0.18" >RR -</text>
<text x="94.10" y="520.57" text-anchor="start" font-size="9" letter-spacing="-0.3" fill="#141414" stroke="#141414" stroke-width="0.18" >A11</text>
<path d="M90.30,519.75 Q95.70,524.35 90.30,528.95" fill="none" stroke="#3a3a3a" stroke-width="1"/>
<text x="82.80" y="527.57" text-anchor="end" font-size="9" letter-spacing="-0.3" fill="#141414" stroke="#141414" stroke-width="0.18" >RR +</text>
<text x="94.10" y="534.94" text-anchor="start" font-size="9" letter-spacing="-0.3" fill="#141414" stroke="#141414" stroke-width="0.18" >A12</text>
<path d="M90.30,534.12 Q95.70,538.72 90.30,543.32" fill="none" stroke="#3a3a3a" stroke-width="1"/>
<text x="82.80" y="541.94" text-anchor="end" font-size="9" letter-spacing="-0.3" fill="#141414" stroke="#141414" stroke-width="0.18" >GROUND</text>
<text x="94.10" y="549.30" text-anchor="start" font-size="9" letter-spacing="-0.3" fill="#141414" stroke="#141414" stroke-width="0.18" >B1</text>
<path d="M90.30,548.48 Q95.70,553.08 90.30,557.68" fill="none" stroke="#3a3a3a" stroke-width="1"/>
<text x="81.20" y="556.30" text-anchor="end" font-size="9" letter-spacing="-0.3" fill="#141414" stroke="#141414" stroke-width="0.18" >BATTERY</text>
<text x="94.10" y="563.67" text-anchor="start" font-size="9" letter-spacing="-0.3" fill="#141414" stroke="#141414" stroke-width="0.18" >B2</text>
<path d="M90.30,562.84 Q95.70,567.44 90.30,572.04" fill="none" stroke="#3a3a3a" stroke-width="1"/>
<text x="94.10" y="578.03" text-anchor="start" font-size="9" letter-spacing="-0.3" fill="#141414" stroke="#141414" stroke-width="0.18" >B3</text>
<path d="M90.30,577.21 Q95.70,581.81 90.30,586.41" fill="none" stroke="#3a3a3a" stroke-width="1"/>
<text x="94.10" y="592.40" text-anchor="start" font-size="9" letter-spacing="-0.3" fill="#141414" stroke="#141414" stroke-width="0.18" >B4</text>
<path d="M90.30,591.57 Q95.70,596.17 90.30,600.77" fill="none" stroke="#3a3a3a" stroke-width="1"/>
<text x="82.80" y="599.40" text-anchor="end" font-size="9" letter-spacing="-0.3" fill="#141414" stroke="#141414" stroke-width="0.18" >DIM SIG</text>
<text x="94.10" y="606.76" text-anchor="start" font-size="9" letter-spacing="-0.3" fill="#141414" stroke="#141414" stroke-width="0.18" >B5</text>
<path d="M90.30,605.94 Q95.70,610.54 90.30,615.14" fill="none" stroke="#3a3a3a" stroke-width="1"/>
<text x="82.80" y="613.76" text-anchor="end" font-size="9" letter-spacing="-0.3" fill="#141414" stroke="#141414" stroke-width="0.18" >GROUND</text>
<text x="94.10" y="621.13" text-anchor="start" font-size="9" letter-spacing="-0.3" fill="#141414" stroke="#141414" stroke-width="0.18" >B6</text>
<path d="M90.30,620.30 Q95.70,624.90 90.30,629.50" fill="none" stroke="#3a3a3a" stroke-width="1"/>
<text x="94.10" y="635.49" text-anchor="start" font-size="9" letter-spacing="-0.3" fill="#141414" stroke="#141414" stroke-width="0.18" >B7</text>
<path d="M90.30,634.67 Q95.70,639.27 90.30,643.87" fill="none" stroke="#3a3a3a" stroke-width="1"/>
<text x="82.80" y="642.49" text-anchor="end" font-size="9" letter-spacing="-0.3" fill="#141414" stroke="#141414" stroke-width="0.18" >REAR AUDIO</text>
<text x="94.10" y="649.86" text-anchor="start" font-size="9" letter-spacing="-0.3" fill="#141414" stroke="#141414" stroke-width="0.18" >B8</text>
<path d="M90.30,649.03 Q95.70,653.63 90.30,658.24" fill="none" stroke="#3a3a3a" stroke-width="1"/>
<text x="82.80" y="656.86" text-anchor="end" font-size="9" letter-spacing="-0.3" fill="#141414" stroke="#141414" stroke-width="0.18" >LR +</text>
<text x="94.10" y="664.22" text-anchor="start" font-size="9" letter-spacing="-0.3" fill="#141414" stroke="#141414" stroke-width="0.18" >B9</text>
<path d="M90.30,663.40 Q95.70,668.00 90.30,672.60" fill="none" stroke="#3a3a3a" stroke-width="1"/>
<text x="82.80" y="671.22" text-anchor="end" font-size="9" letter-spacing="-0.3" fill="#141414" stroke="#141414" stroke-width="0.18" >LR -</text>
<text x="94.10" y="678.59" text-anchor="start" font-size="9" letter-spacing="-0.3" fill="#141414" stroke="#141414" stroke-width="0.18" >B10</text>
<path d="M90.30,677.76 Q95.70,682.37 90.30,686.97" fill="none" stroke="#3a3a3a" stroke-width="1"/>
<text x="82.80" y="685.59" text-anchor="end" font-size="9" letter-spacing="-0.3" fill="#141414" stroke="#141414" stroke-width="0.18" >RF -</text>
<text x="94.10" y="692.95" text-anchor="start" font-size="9" letter-spacing="-0.3" fill="#141414" stroke="#141414" stroke-width="0.18" >B11</text>
<path d="M90.30,692.13 Q95.70,696.73 90.30,701.33" fill="none" stroke="#3a3a3a" stroke-width="1"/>
<text x="82.80" y="699.95" text-anchor="end" font-size="9" letter-spacing="-0.3" fill="#141414" stroke="#141414" stroke-width="0.18" >RF +</text>
<text x="94.10" y="707.32" text-anchor="start" font-size="9" letter-spacing="-0.3" fill="#141414" stroke="#141414" stroke-width="0.18" >B12</text>
<path d="M90.30,706.50 Q95.70,711.10 90.30,715.70" fill="none" stroke="#3a3a3a" stroke-width="1"/>
<text x="82.80" y="714.32" text-anchor="end" font-size="9" letter-spacing="-0.3" fill="#141414" stroke="#141414" stroke-width="0.18" >LMPS ON IN</text>
<text x="136.30" y="377.12" text-anchor="start" font-size="9" letter-spacing="-0.3" fill="#141414" stroke="#141414" stroke-width="0.18" >ORG</text>
<text x="193.30" y="377.12" text-anchor="start" font-size="9" letter-spacing="-0.3" fill="#141414" stroke="#141414" stroke-width="0.18" >1044</text>
<text x="118.20" y="405.85" text-anchor="start" font-size="9" letter-spacing="-0.3" fill="#141414" stroke="#141414" stroke-width="0.18" >PPL (OR BLK)</text>
<text x="193.30" y="405.85" text-anchor="start" font-size="9" letter-spacing="-0.3" fill="#141414" stroke="#141414" stroke-width="0.18" >493</text>
<text x="136.30" y="448.95" text-anchor="start" font-size="9" letter-spacing="-0.3" fill="#141414" stroke="#141414" stroke-width="0.18" >PNK</text>
<text x="193.30" y="448.95" text-anchor="start" font-size="9" letter-spacing="-0.3" fill="#141414" stroke="#141414" stroke-width="0.18" >314</text>
<text x="136.30" y="463.31" text-anchor="start" font-size="9" letter-spacing="-0.3" fill="#141414" stroke="#141414" stroke-width="0.18" >DK BLU</text>
<text x="193.30" y="463.31" text-anchor="start" font-size="9" letter-spacing="-0.3" fill="#141414" stroke="#141414" stroke-width="0.18" >1796</text>
<text x="136.30" y="477.68" text-anchor="start" font-size="9" letter-spacing="-0.3" fill="#141414" stroke="#141414" stroke-width="0.18" >TAN</text>
<text x="193.30" y="477.68" text-anchor="start" font-size="9" letter-spacing="-0.3" fill="#141414" stroke="#141414" stroke-width="0.18" >201</text>
<text x="136.30" y="492.04" text-anchor="start" font-size="9" letter-spacing="-0.3" fill="#141414" stroke="#141414" stroke-width="0.18" >GRY</text>
<text x="193.30" y="492.04" text-anchor="start" font-size="9" letter-spacing="-0.3" fill="#141414" stroke="#141414" stroke-width="0.18" >118</text>
<text x="136.30" y="506.41" text-anchor="start" font-size="9" letter-spacing="-0.3" fill="#141414" stroke="#141414" stroke-width="0.18" >LT BLU</text>
<text x="193.30" y="506.41" text-anchor="start" font-size="9" letter-spacing="-0.3" fill="#141414" stroke="#141414" stroke-width="0.18" >115</text>
<text x="136.30" y="520.77" text-anchor="start" font-size="9" letter-spacing="-0.3" fill="#141414" stroke="#141414" stroke-width="0.18" >DK BLU</text>
<text x="193.30" y="520.77" text-anchor="start" font-size="9" letter-spacing="-0.3" fill="#141414" stroke="#141414" stroke-width="0.18" >46</text>
<text x="136.30" y="535.14" text-anchor="start" font-size="9" letter-spacing="-0.3" fill="#141414" stroke="#141414" stroke-width="0.18" >BLK/WHT</text>
<text x="193.30" y="535.14" text-anchor="start" font-size="9" letter-spacing="-0.3" fill="#141414" stroke="#141414" stroke-width="0.18" >351</text>
<text x="136.30" y="549.50" text-anchor="start" font-size="9" letter-spacing="-0.3" fill="#141414" stroke="#141414" stroke-width="0.18" >ORG</text>
<text x="193.30" y="549.50" text-anchor="start" font-size="9" letter-spacing="-0.3" fill="#141414" stroke="#141414" stroke-width="0.18" >640</text>
<text x="136.30" y="592.60" text-anchor="start" font-size="9" letter-spacing="-0.3" fill="#141414" stroke="#141414" stroke-width="0.18" >BRN/WHT</text>
<text x="193.30" y="592.60" text-anchor="start" font-size="9" letter-spacing="-0.3" fill="#141414" stroke="#141414" stroke-width="0.18" >230</text>
<text x="136.30" y="606.96" text-anchor="start" font-size="9" letter-spacing="-0.3" fill="#141414" stroke="#141414" stroke-width="0.18" >BLK/WHT</text>
<text x="193.30" y="606.96" text-anchor="start" font-size="9" letter-spacing="-0.3" fill="#141414" stroke="#141414" stroke-width="0.18" >351</text>
<text x="136.30" y="635.69" text-anchor="start" font-size="9" letter-spacing="-0.3" fill="#141414" stroke="#141414" stroke-width="0.18" >LT GRN</text>
<text x="193.30" y="635.69" text-anchor="start" font-size="9" letter-spacing="-0.3" fill="#141414" stroke="#141414" stroke-width="0.18" >1011</text>
<text x="136.30" y="650.06" text-anchor="start" font-size="9" letter-spacing="-0.3" fill="#141414" stroke="#141414" stroke-width="0.18" >BRN</text>
<text x="193.30" y="650.06" text-anchor="start" font-size="9" letter-spacing="-0.3" fill="#141414" stroke="#141414" stroke-width="0.18" >199</text>
<text x="136.30" y="664.42" text-anchor="start" font-size="9" letter-spacing="-0.3" fill="#141414" stroke="#141414" stroke-width="0.18" >YEL</text>
<text x="193.30" y="664.42" text-anchor="start" font-size="9" letter-spacing="-0.3" fill="#141414" stroke="#141414" stroke-width="0.18" >116</text>
<text x="136.30" y="678.79" text-anchor="start" font-size="9" letter-spacing="-0.3" fill="#141414" stroke="#141414" stroke-width="0.18" >DK GRN</text>
<text x="193.30" y="678.79" text-anchor="start" font-size="9" letter-spacing="-0.3" fill="#141414" stroke="#141414" stroke-width="0.18" >117</text>
<text x="136.30" y="693.15" text-anchor="start" font-size="9" letter-spacing="-0.3" fill="#141414" stroke="#141414" stroke-width="0.18" >LT GRN</text>
<text x="193.30" y="693.15" text-anchor="start" font-size="9" letter-spacing="-0.3" fill="#141414" stroke="#141414" stroke-width="0.18" >200</text>
<text x="136.30" y="707.52" text-anchor="start" font-size="9" letter-spacing="-0.3" fill="#141414" stroke="#141414" stroke-width="0.18" >GRY/BLK</text>
<text x="193.30" y="707.52" text-anchor="start" font-size="9" letter-spacing="-0.3" fill="#141414" stroke="#141414" stroke-width="0.18" >308</text>
<path d="M92.50,380.70 L236.70,380.70 L236.70,358.00" stroke="#d28e48" stroke-width="2" fill="none" stroke-linejoin="miter" stroke-linecap="butt" />
<path d="M231.6,358.6 L236.7,351.4 L241.8,358.6 Z" fill="#111"/>
<text x="236.00" y="324.42" text-anchor="middle" font-size="9" letter-spacing="-0.3" fill="#141414" stroke="#141414" stroke-width="0.18" >COMPUTER</text>
<text x="236.00" y="334.82" text-anchor="middle" font-size="9" letter-spacing="-0.3" fill="#141414" stroke="#141414" stroke-width="0.18" >DATA LINES</text>
<text x="236.00" y="345.02" text-anchor="middle" font-size="9" letter-spacing="-0.3" fill="#141414" stroke="#141414" stroke-width="0.18" >SYSTEM</text>
<path d="M92.50,409.43 L250.50,409.43" stroke="#bb44c4" stroke-width="2" fill="none" stroke-linejoin="miter" stroke-linecap="butt" />
<path d="M253.30,404.83 Q247.90,409.43 253.30,414.03" fill="none" stroke="#3a3a3a" stroke-width="1"/>
<text x="239.50" y="406.65" text-anchor="start" font-size="9" letter-spacing="-0.3" fill="#141414" stroke="#141414" stroke-width="0.18" >D6</text>
<text x="257.50" y="412.05" text-anchor="start" font-size="9" letter-spacing="-0.3" fill="#141414" stroke="#141414" stroke-width="0.18" >(NOT USED)</text>
<path d="M92.50,452.52 L366.10,452.52 L366.10,352.50" stroke="#daa2b4" stroke-width="1.8" fill="none" stroke-linejoin="miter" stroke-linecap="butt" />
<path d="M92.50,466.89 L423.80,466.89 L423.80,352.50" stroke="#141c40" stroke-width="2" fill="none" stroke-linejoin="miter" stroke-linecap="butt" />
<path d="M92.50,481.25 L667.80,481.25 L667.80,236.70 L970.00,236.70" stroke="#8c8262" stroke-width="1.8" fill="none" stroke-linejoin="miter" stroke-linecap="butt" />
<path d="M92.50,495.62 L682.40,495.62 L682.40,308.60 L970.00,308.60" stroke="#bdbdbd" stroke-width="1.8" fill="none" stroke-linejoin="miter" stroke-linecap="butt" />
<path d="M92.50,509.99 L811.60,509.99 L811.60,552.70 L955.00,552.70" stroke="#5ae0e8" stroke-width="2" fill="none" stroke-linejoin="miter" stroke-linecap="butt" />
<path d="M92.50,524.35 L797.70,524.35 L797.70,581.60 L955.00,581.60" stroke="#141c40" stroke-width="2" fill="none" stroke-linejoin="miter" stroke-linecap="butt" />
<path d="M92.50,538.72 L251.20,538.72 L251.20,603.80" stroke="#555555" stroke-width="1.3" fill="none" stroke-linejoin="miter" stroke-linecap="butt" />
<path d="M92.50,553.08 L581.80,553.08 L581.80,40.00" stroke="#d28e48" stroke-width="2" fill="none" stroke-linejoin="miter" stroke-linecap="butt" />
<path d="M92.50,596.17 L380.60,596.17" stroke="#858585" stroke-width="1.8" fill="none" stroke-linejoin="miter" stroke-linecap="butt" />
<path d="M380.6,591.47 L389,596.17 L380.6,600.88 Z" fill="#111"/>
<text x="395.50" y="600.00" text-anchor="start" font-size="9" letter-spacing="-0.3" fill="#141414" stroke="#141414" stroke-width="0.18" >INTERIOR LIGHTS SYSTEM</text>
<path d="M92.50,610.54 L244.10,610.54" stroke="#555555" stroke-width="2" fill="none" stroke-linejoin="miter" stroke-linecap="butt" />
<circle cx="251.20" cy="610.54" r="2.1" fill="#1a1a1a"/>
<path d="M258.20,610.54 L346.00,610.54" stroke="#585858" stroke-width="2" fill="none" stroke-linejoin="miter" stroke-linecap="butt" stroke-dasharray="8.7,4.8"/>
<circle cx="351.80" cy="610.54" r="2.0" fill="#1a1a1a"/>
<path d="M354.60,604.64 L354.60,616.44" stroke="#333" stroke-width="1.3" fill="none" stroke-linejoin="miter" stroke-linecap="butt" />
<path d="M357.40,606.94 L357.40,614.14" stroke="#777" stroke-width="1.2" fill="none" stroke-linejoin="miter" stroke-linecap="butt" />
<path d="M359.60,608.74 L359.60,612.34" stroke="#555" stroke-width="1.2" fill="none" stroke-linejoin="miter" stroke-linecap="butt" />
<text x="280.10" y="607.52" text-anchor="start" font-size="9" letter-spacing="-0.3" fill="#141414" stroke="#141414" stroke-width="0.18" >BLK/WHT</text>
<text x="261.00" y="621.02" text-anchor="start" font-size="9" letter-spacing="-0.3" fill="#141414" stroke="#141414" stroke-width="0.18" >S247</text>
<text x="365.10" y="612.62" text-anchor="start" font-size="9" letter-spacing="-0.3" fill="#141414" stroke="#141414" stroke-width="0.18" >G202</text>
<text x="365.10" y="623.82" text-anchor="start" font-size="9" letter-spacing="-0.3" fill="#141414" stroke="#141414" stroke-width="0.18" >(LEFT SIDE</text>
<text x="365.10" y="633.82" text-anchor="start" font-size="9" letter-spacing="-0.3" fill="#141414" stroke="#141414" stroke-width="0.18" >OF DASH)</text>
<path d="M92.50,639.27 L250.30,639.27" stroke="#4cd84c" stroke-width="2" fill="none" stroke-linejoin="miter" stroke-linecap="butt" />
<path d="M253.10,634.67 Q247.70,639.27 253.10,643.87" fill="none" stroke="#3a3a3a" stroke-width="1"/>
<text x="239.30" y="637.09" text-anchor="start" font-size="9" letter-spacing="-0.3" fill="#141414" stroke="#141414" stroke-width="0.18" >E8</text>
<text x="258.10" y="642.29" text-anchor="start" font-size="9" letter-spacing="-0.3" fill="#141414" stroke="#141414" stroke-width="0.18" >(NOT USED)</text>
<path d="M92.50,653.63 L783.00,653.63 L783.00,625.00 L955.00,625.00" stroke="#6e5a2e" stroke-width="2" fill="none" stroke-linejoin="miter" stroke-linecap="butt" />
<path d="M92.50,668.00 L797.70,668.00 L797.70,653.80 L955.00,653.80" stroke="#eaea5c" stroke-width="2" fill="none" stroke-linejoin="miter" stroke-linecap="butt" />
<path d="M92.50,682.37 L696.60,682.37 L696.60,380.50 L970.00,380.50" stroke="#1f681f" stroke-width="2" fill="none" stroke-linejoin="miter" stroke-linecap="butt" />
<path d="M92.50,696.73 L711.30,696.73 L711.30,452.60 L970.00,452.60" stroke="#4cd84c" stroke-width="2" fill="none" stroke-linejoin="miter" stroke-linecap="butt" />
<path d="M92.50,711.10 L222.60,711.10" stroke="#b6b6b6" stroke-width="2" fill="none" stroke-linejoin="miter" stroke-linecap="butt" />
<path d="M222.6,706.39 L230.1,711.10 L222.6,715.80 Z" fill="#111"/>
<text x="234.60" y="711.02" text-anchor="start" font-size="9" letter-spacing="-0.3" fill="#141414" stroke="#141414" stroke-width="0.18" >INTERIOR</text>
<text x="234.60" y="721.42" text-anchor="start" font-size="9" letter-spacing="-0.3" fill="#141414" stroke="#141414" stroke-width="0.18" >LIGHTS</text>
<text x="234.60" y="731.82" text-anchor="start" font-size="9" letter-spacing="-0.3" fill="#141414" stroke="#141414" stroke-width="0.18" >SYSTEM</text>
<path d="M90.30,728.20 Q95.70,732.80 90.30,737.40" fill="none" stroke="#3a3a3a" stroke-width="1"/>
<path d="M90.30,742.80 Q95.70,747.40 90.30,752.00" fill="none" stroke="#3a3a3a" stroke-width="1"/>
<text x="94.70" y="730.22" text-anchor="start" font-size="9" letter-spacing="-0.3" fill="#141414" stroke="#141414" stroke-width="0.18" >A</text>
<text x="94.70" y="744.02" text-anchor="start" font-size="9" letter-spacing="-0.3" fill="#141414" stroke="#141414" stroke-width="0.18" >C</text>
<text x="115.70" y="730.22" text-anchor="start" font-size="9" letter-spacing="-0.3" fill="#141414" stroke="#141414" stroke-width="0.18" >NCA</text>
<text x="115.70" y="744.02" text-anchor="start" font-size="9" letter-spacing="-0.3" fill="#141414" stroke="#141414" stroke-width="0.18" >NCA</text>
<path d="M143.6,751 L143.6,772 M175.6,751 L175.6,772 M143.9,747.2 L149.5,743.3 L170,743.3 L175.6,747.2 L170,750.8 L149.5,750.8 Z M143.9,775.7 L149.5,772.3 L170,772.3 L175.6,775.7 L170,780.2 L149.5,780.2 Z" fill="none" stroke="#b0b0b0" stroke-width="1.1" stroke-dasharray="3.6,3"/>
<path d="M92.50,732.80 L157.90,732.80 L157.90,804.40" stroke="#111" stroke-width="2" fill="none" stroke-linejoin="miter" stroke-linecap="butt" />
<path d="M92.50,747.40 L143.80,747.40" stroke="#111" stroke-width="2" fill="none" stroke-linejoin="miter" stroke-linecap="butt" />
<circle cx="143.80" cy="747.40" r="1.8" fill="#111"/>
<path d="M143.80,775.80 L70.80,775.80 L70.80,785.00" stroke="#111" stroke-width="2" fill="none" stroke-linejoin="miter" stroke-linecap="butt" />
<circle cx="143.80" cy="775.80" r="1.8" fill="#111"/>
<text x="93.20" y="772.92" text-anchor="start" font-size="9" letter-spacing="-0.3" fill="#141414" stroke="#141414" stroke-width="0.18" >NCA</text>
<text x="134.40" y="796.92" text-anchor="start" font-size="9" letter-spacing="-0.3" fill="#141414" stroke="#141414" stroke-width="0.18" >NCA</text>
<circle cx="71.20" cy="790.40" r="1.7" fill="#222"/>
<path d="M65.80,792.60 L76.60,792.60" stroke="#333" stroke-width="1" fill="none" stroke-linejoin="miter" stroke-linecap="butt" />
<path d="M67.60,795.20 L74.80,795.20" stroke="#333" stroke-width="1" fill="none" stroke-linejoin="miter" stroke-linecap="butt" />
<path d="M69.40,797.80 L73.00,797.80" stroke="#333" stroke-width="1" fill="none" stroke-linejoin="miter" stroke-linecap="butt" />
<rect x="136.3" y="804.4" width="43.2" height="21.6" fill="#d9d9fa" stroke="#5a5a70" stroke-width="1.2"/>
<text x="158.80" y="836.62" text-anchor="middle" font-size="9" letter-spacing="-0.3" fill="#141414" stroke="#141414" stroke-width="0.18" >WINDSHIELD</text>
<text x="158.80" y="847.02" text-anchor="middle" font-size="9" letter-spacing="-0.3" fill="#141414" stroke="#141414" stroke-width="0.18" >ANTENNA</text>
<text x="71.00" y="808.92" text-anchor="middle" font-size="9" letter-spacing="-0.3" fill="#141414" stroke="#141414" stroke-width="0.18" >G909</text>
<text x="71.00" y="819.62" text-anchor="middle" font-size="9" letter-spacing="-0.3" fill="#141414" stroke="#141414" stroke-width="0.18" >(CENTER FRONT</text>
<text x="71.00" y="830.12" text-anchor="middle" font-size="9" letter-spacing="-0.3" fill="#141414" stroke="#141414" stroke-width="0.18" >OF ROOF, ON</text>
<text x="71.00" y="840.62" text-anchor="middle" font-size="9" letter-spacing="-0.3" fill="#141414" stroke="#141414" stroke-width="0.18" >WINDSHIELD</text>
<text x="71.00" y="850.82" text-anchor="middle" font-size="9" letter-spacing="-0.3" fill="#141414" stroke="#141414" stroke-width="0.18" >FRAME)</text>
<text x="13.80" y="906.62" text-anchor="start" font-size="9" letter-spacing="0" fill="#141414" stroke="#141414" stroke-width="0.18" >133697</text>
<rect x="975.2" y="218.30" width="54.1" height="101.6" fill="#d9d9fa" stroke="#5a5a70" stroke-width="1.3"/>
<path d="M972.60,231.70 Q970.90,235.10 970.50,236.70 Q970.90,238.30 972.60,241.70" fill="none" stroke="#3a3a3a" stroke-width="1"/>
<path d="M972.60,303.60 Q970.90,307.00 970.50,308.60 Q970.90,310.20 972.60,313.60" fill="none" stroke="#3a3a3a" stroke-width="1"/>
<path d="M975.80,236.70 L998.50,236.70 L998.50,244.20" stroke="#45456a" stroke-width="1.3" fill="none" stroke-linejoin="miter" stroke-linecap="butt" />
<path d="M979.8,233.10 L975.9,236.70 L979.8,240.30" fill="none" stroke="#45456a" stroke-width="1.1"/>
<path d="M994.3,246.60 Q998.5,241.60 1002.7,246.60" fill="none" stroke="#45456a" stroke-width="1"/>
<rect x="987.5" y="250.00" width="22.9" height="46.5" fill="#c9c9f1" stroke="#45456a" stroke-width="1.3"/>
<path d="M1010.4,250.00 L1018.3,246.00 L1018.3,300.30 L1010.4,296.50" fill="#dcdcfa" stroke="#45456a" stroke-width="1.1"/>
<path d="M998.50,250.50 L998.50,260.50" stroke="#45456a" stroke-width="1" fill="none" stroke-linejoin="miter" stroke-linecap="butt" />
<path d="M998.5,260.50 C1003.2,261.00 1003.2,265.90 998.5,266.40 C1003.2,266.90 1003.2,271.80 998.5,272.30 C1003.2,272.80 1003.2,277.70 998.5,278.20 C1003.2,278.70 1003.2,283.60 998.5,284.10" fill="none" stroke="#45456a" stroke-width="1"/>
<path d="M998.50,284.10 L998.50,296.00" stroke="#45456a" stroke-width="1" fill="none" stroke-linejoin="miter" stroke-linecap="butt" />
<path d="M994.6,254.20 L998.5,250.40 L1002.4,254.20" fill="none" stroke="#45456a" stroke-width="1"/>
<path d="M994.6,292.30 L998.5,296.10 L1002.4,292.30" fill="none" stroke="#45456a" stroke-width="1"/>
<path d="M994.3,299.30 Q998.5,304.30 1002.7,299.30" fill="none" stroke="#45456a" stroke-width="1"/>
<path d="M998.50,302.00 L998.50,308.60 L975.80,308.60" stroke="#45456a" stroke-width="1.3" fill="none" stroke-linejoin="miter" stroke-linecap="butt" />
<path d="M979.8,305.00 L975.9,308.60 L979.8,312.20" fill="none" stroke="#45456a" stroke-width="1.1"/>
<text x="953.00" y="234.62" text-anchor="end" font-size="9" letter-spacing="-0.3" fill="#141414" stroke="#141414" stroke-width="0.18" >TAN</text>
<text x="966.20" y="234.62" text-anchor="middle" font-size="9" letter-spacing="-0.3" fill="#141414" stroke="#141414" stroke-width="0.18" >B</text>
<text x="951.50" y="306.22" text-anchor="end" font-size="9" letter-spacing="-0.3" fill="#141414" stroke="#141414" stroke-width="0.18" >GRY</text>
<text x="965.00" y="306.22" text-anchor="middle" font-size="9" letter-spacing="-0.3" fill="#141414" stroke="#141414" stroke-width="0.18" >A</text>
<text x="1027.60" y="330.82" text-anchor="end" font-size="9" letter-spacing="-0.3" fill="#141414" stroke="#141414" stroke-width="0.18" >LEFT FRONT</text>
<text x="1027.60" y="341.52" text-anchor="end" font-size="9" letter-spacing="-0.3" fill="#141414" stroke="#141414" stroke-width="0.18" >DOOR SPEAKER</text>
<rect x="975.2" y="362.20" width="54.1" height="101.6" fill="#d9d9fa" stroke="#5a5a70" stroke-width="1.3"/>
<path d="M972.60,375.60 Q970.90,379.00 970.50,380.60 Q970.90,382.20 972.60,385.60" fill="none" stroke="#3a3a3a" stroke-width="1"/>
<path d="M972.60,447.50 Q970.90,450.90 970.50,452.50 Q970.90,454.10 972.60,457.50" fill="none" stroke="#3a3a3a" stroke-width="1"/>
<path d="M975.80,380.60 L998.50,380.60 L998.50,388.10" stroke="#45456a" stroke-width="1.3" fill="none" stroke-linejoin="miter" stroke-linecap="butt" />
<path d="M979.8,377.00 L975.9,380.60 L979.8,384.20" fill="none" stroke="#45456a" stroke-width="1.1"/>
<path d="M994.3,390.50 Q998.5,385.50 1002.7,390.50" fill="none" stroke="#45456a" stroke-width="1"/>
<rect x="987.5" y="393.90" width="22.9" height="46.5" fill="#c9c9f1" stroke="#45456a" stroke-width="1.3"/>
<path d="M1010.4,393.90 L1018.3,389.90 L1018.3,444.20 L1010.4,440.40" fill="#dcdcfa" stroke="#45456a" stroke-width="1.1"/>
<path d="M998.50,394.40 L998.50,404.40" stroke="#45456a" stroke-width="1" fill="none" stroke-linejoin="miter" stroke-linecap="butt" />
<path d="M998.5,404.40 C1003.2,404.90 1003.2,409.80 998.5,410.30 C1003.2,410.80 1003.2,415.70 998.5,416.20 C1003.2,416.70 1003.2,421.60 998.5,422.10 C1003.2,422.60 1003.2,427.50 998.5,428.00" fill="none" stroke="#45456a" stroke-width="1"/>
<path d="M998.50,428.00 L998.50,439.90" stroke="#45456a" stroke-width="1" fill="none" stroke-linejoin="miter" stroke-linecap="butt" />
<path d="M994.6,398.10 L998.5,394.30 L1002.4,398.10" fill="none" stroke="#45456a" stroke-width="1"/>
<path d="M994.6,436.20 L998.5,440.00 L1002.4,436.20" fill="none" stroke="#45456a" stroke-width="1"/>
<path d="M994.3,443.20 Q998.5,448.20 1002.7,443.20" fill="none" stroke="#45456a" stroke-width="1"/>
<path d="M998.50,445.90 L998.50,452.50 L975.80,452.50" stroke="#45456a" stroke-width="1.3" fill="none" stroke-linejoin="miter" stroke-linecap="butt" />
<path d="M979.8,448.90 L975.9,452.50 L979.8,456.10" fill="none" stroke="#45456a" stroke-width="1.1"/>
<text x="953.00" y="378.52" text-anchor="end" font-size="9" letter-spacing="-0.3" fill="#141414" stroke="#141414" stroke-width="0.18" >DK GRN</text>
<text x="966.20" y="378.52" text-anchor="middle" font-size="9" letter-spacing="-0.3" fill="#141414" stroke="#141414" stroke-width="0.18" >A</text>
<text x="951.50" y="450.12" text-anchor="end" font-size="9" letter-spacing="-0.3" fill="#141414" stroke="#141414" stroke-width="0.18" >LT GRN</text>
<text x="965.00" y="450.12" text-anchor="middle" font-size="9" letter-spacing="-0.3" fill="#141414" stroke="#141414" stroke-width="0.18" >B</text>
<text x="1027.60" y="474.72" text-anchor="end" font-size="9" letter-spacing="-0.3" fill="#141414" stroke="#141414" stroke-width="0.18" >RIGHT FRONT</text>
<text x="1027.60" y="485.42" text-anchor="end" font-size="9" letter-spacing="-0.3" fill="#141414" stroke="#141414" stroke-width="0.18" >DOOR SPEAKER</text>
<path d="M982.5,543.80 L990.2,539.40 L990.2,594.50 L982.5,590.40 Z" fill="#ffffff" stroke="#5a5a70" stroke-width="1.2"/>
<rect x="959.5" y="543.80" width="23" height="46.6" fill="#d9d9fa" stroke="#50506a" stroke-width="1.5"/>
<path d="M957.40,547.70 Q955.70,551.10 955.30,552.70 Q955.70,554.30 957.40,557.70" fill="none" stroke="#3a3a3a" stroke-width="1"/>
<path d="M957.40,576.60 Q955.70,580.00 955.30,581.60 Q955.70,583.20 957.40,586.60" fill="none" stroke="#3a3a3a" stroke-width="1"/>
<path d="M960.00,552.70 L970.20,552.70" stroke="#45456a" stroke-width="1.3" fill="none" stroke-linejoin="miter" stroke-linecap="butt" />
<path d="M960.00,581.60 L970.20,581.60" stroke="#45456a" stroke-width="1.3" fill="none" stroke-linejoin="miter" stroke-linecap="butt" />
<path d="M970.2,552.70 C975.2,553.20 975.2,559.43 970.2,559.93 C975.2,560.43 975.2,566.65 970.2,567.15 C975.2,567.65 975.2,573.88 970.2,574.38 C975.2,574.88 975.2,581.10 970.2,581.60" fill="none" stroke="#45456a" stroke-width="1.1"/>
<path d="M964,549.10 L960,552.70 L964,556.30" fill="none" stroke="#45456a" stroke-width="1.1"/>
<path d="M964,578.00 L960,581.60 L964,585.20" fill="none" stroke="#45456a" stroke-width="1.1"/>
<text x="937.60" y="549.82" text-anchor="end" font-size="9" letter-spacing="-0.3" fill="#141414" stroke="#141414" stroke-width="0.18" >LT BLU</text>
<text x="951.00" y="549.82" text-anchor="middle" font-size="9" letter-spacing="-0.3" fill="#141414" stroke="#141414" stroke-width="0.18" >A</text>
<text x="937.60" y="578.72" text-anchor="end" font-size="9" letter-spacing="-0.3" fill="#141414" stroke="#141414" stroke-width="0.18" >DK BLU</text>
<text x="951.00" y="578.72" text-anchor="middle" font-size="9" letter-spacing="-0.3" fill="#141414" stroke="#141414" stroke-width="0.18" >B</text>
<text x="996.60" y="549.72" text-anchor="start" font-size="9" letter-spacing="-0.3" fill="#141414" stroke="#141414" stroke-width="0.18" >RIGHT</text>
<text x="996.60" y="560.42" text-anchor="start" font-size="9" letter-spacing="-0.3" fill="#141414" stroke="#141414" stroke-width="0.18" >REAR</text>
<text x="996.60" y="571.12" text-anchor="start" font-size="9" letter-spacing="-0.3" fill="#141414" stroke="#141414" stroke-width="0.18" >LIFTGATE</text>
<text x="996.60" y="581.82" text-anchor="start" font-size="9" letter-spacing="-0.3" fill="#141414" stroke="#141414" stroke-width="0.18" >SPEAKER</text>
<path d="M982.5,615.80 L990.2,611.40 L990.2,666.50 L982.5,662.40 Z" fill="#ffffff" stroke="#5a5a70" stroke-width="1.2"/>
<rect x="959.5" y="615.80" width="23" height="46.6" fill="#d9d9fa" stroke="#50506a" stroke-width="1.5"/>
<path d="M957.40,620.00 Q955.70,623.40 955.30,625.00 Q955.70,626.60 957.40,630.00" fill="none" stroke="#3a3a3a" stroke-width="1"/>
<path d="M957.40,648.80 Q955.70,652.20 955.30,653.80 Q955.70,655.40 957.40,658.80" fill="none" stroke="#3a3a3a" stroke-width="1"/>
<path d="M960.00,625.00 L970.20,625.00" stroke="#45456a" stroke-width="1.3" fill="none" stroke-linejoin="miter" stroke-linecap="butt" />
<path d="M960.00,653.80 L970.20,653.80" stroke="#45456a" stroke-width="1.3" fill="none" stroke-linejoin="miter" stroke-linecap="butt" />
<path d="M970.2,625.00 C975.2,625.50 975.2,631.70 970.2,632.20 C975.2,632.70 975.2,638.90 970.2,639.40 C975.2,639.90 975.2,646.10 970.2,646.60 C975.2,647.10 975.2,653.30 970.2,653.80" fill="none" stroke="#45456a" stroke-width="1.1"/>
<path d="M964,621.40 L960,625.00 L964,628.60" fill="none" stroke="#45456a" stroke-width="1.1"/>
<path d="M964,650.20 L960,653.80 L964,657.40" fill="none" stroke="#45456a" stroke-width="1.1"/>
<text x="937.60" y="622.12" text-anchor="end" font-size="9" letter-spacing="-0.3" fill="#141414" stroke="#141414" stroke-width="0.18" >BRN</text>
<text x="951.00" y="622.12" text-anchor="middle" font-size="9" letter-spacing="-0.3" fill="#141414" stroke="#141414" stroke-width="0.18" >B</text>
<text x="937.60" y="650.92" text-anchor="end" font-size="9" letter-spacing="-0.3" fill="#141414" stroke="#141414" stroke-width="0.18" >YEL</text>
<text x="951.00" y="650.92" text-anchor="middle" font-size="9" letter-spacing="-0.3" fill="#141414" stroke="#141414" stroke-width="0.18" >A</text>
<text x="996.60" y="621.72" text-anchor="start" font-size="9" letter-spacing="-0.3" fill="#141414" stroke="#141414" stroke-width="0.18" >LEFT</text>
<text x="996.60" y="632.42" text-anchor="start" font-size="9" letter-spacing="-0.3" fill="#141414" stroke="#141414" stroke-width="0.18" >REAR</text>
<text x="996.60" y="643.12" text-anchor="start" font-size="9" letter-spacing="-0.3" fill="#141414" stroke="#141414" stroke-width="0.18" >LIFTGATE</text>
<text x="996.60" y="653.82" text-anchor="start" font-size="9" letter-spacing="-0.3" fill="#141414" stroke="#141414" stroke-width="0.18" >SPEAKER</text>
<rect x="0" y="0" width="1066" height="53.7" fill="#d3d3d3"/>
<text x="334.4" y="29" font-size="17.4" letter-spacing="-0.62" fill="#333">Fig 1: Radio Circuits, Base Radio</text>
</svg></body></html>
